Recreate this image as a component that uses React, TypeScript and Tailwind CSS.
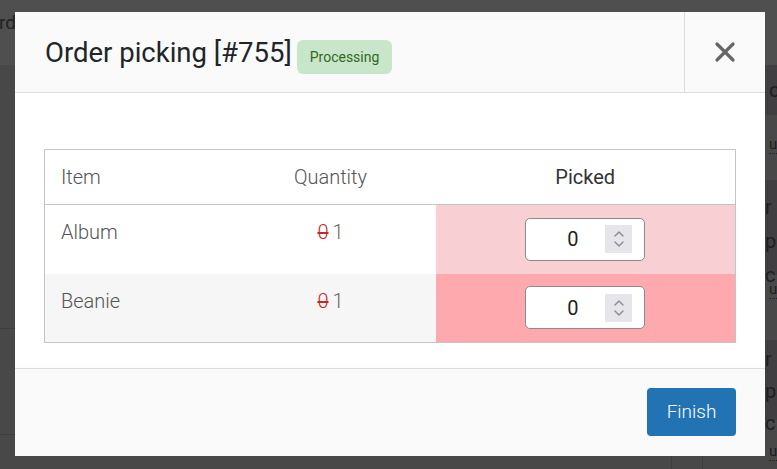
import { ChevronUp, ChevronDown, X } from 'lucide-react';

const rows = [
  { name: 'Album', bg: 'bg-white', picked: 'bg-[#f8d0d3]' },
  { name: 'Beanie', bg: 'bg-[#f5f6f5]', picked: 'bg-[#fea9ae]' },
];

function Stepper() {
  return (
    <div className="w-[120px] h-[43px] rounded-[5px] border border-[#8b8b8b] bg-white flex items-center">
      <span className="flex-1 pl-[14px] text-center text-[20px] text-[#222]">0</span>
      <div className="mr-[12px] w-[27px] h-[28px] bg-[#e6e5ea] flex flex-col items-center justify-center text-[#8a8890]">
        <ChevronUp size={16} strokeWidth={2} className="-mb-[3px]" />
        <ChevronDown size={16} strokeWidth={2} className="-mt-[3px]" />
      </div>
    </div>
  );
}

export default function App() {
  return (
    <div className="relative h-[469px] w-[777px] overflow-hidden bg-[#484848] font-['Roboto',sans-serif]">
      {/* page behind the modal */}
      <div className="h-[65px] bg-[#4f4f4f] pt-[9px] -ml-[1px] text-[19px] text-[#222]">rd</div>
      <div className="flex">
        <div className="flex-1">
          <div className="h-[264px] border-b border-[#3e3e3e]" />
          <div className="h-[106px] border-b border-[#3e3e3e]" />
          <div className="flex h-[40px] justify-end pr-[2px]">
            <div className="w-[32px] border-x border-[#3e3e3e]" />
          </div>
        </div>
        <div className="w-[72px] text-[20px] text-[#1e1e22]">
          <div className="h-[50px] bg-[#403e41] pt-[10px] pl-[64px]">c</div>
          <div className="h-[65px] pt-[18px] pl-[64px] text-[15px]"><span className="border-b border-dotted border-[#222]">us</span></div>
          <div className="h-[95px] bg-[#403e41] pt-[10px] pl-[60px] leading-[34px]">r p<br />c</div>
          <div className="h-[65px] pt-[3px] pl-[64px] text-[15px]"><span className="border-b border-dotted border-[#222]">us</span></div>
          <div className="h-[80px] bg-[#403e41] pt-[3px] pl-[60px] leading-[32px]">r p<br />c</div>
          <div className="h-[49px] pt-[20px] pl-[64px] text-[15px]"><span className="border-b border-dotted border-[#222]">us</span></div>
        </div>
      </div>

      {/* modal */}
      <div className="absolute inset-0 pl-[15px] pt-[12px]">
        <div className="w-[750px] h-[444px] bg-white flex flex-col">
          <div className="flex h-[81px] bg-[#fafafa] border-b border-[#dddddd]">
            <div className="flex-1 flex items-center pl-[30px] pt-[1px]">
              <h1 className="text-[27.5px] text-[#212529] leading-none">Order picking [#755]</h1>
              <span className="ml-[5px] mt-[9px] h-[34px] px-[13px] flex items-center rounded-[6px] bg-[#c8e6c9] text-[14px] text-[#33691e]">Processing</span>
            </div>
            <div className="w-[81px] border-l border-[#dddddd] flex items-center justify-center pb-[1px]">
              <X size={32} strokeWidth={2.4} className="text-[#666]" />
            </div>
          </div>

          <div className="flex-1 px-[29px] pt-[56px]">
            <table className="w-full border border-[#c2c4c6] border-collapse text-[20px]">
              <thead>
                <tr className="h-[55px] border-b border-[#c2c4c6]">
                  <th className="w-[181px] pl-[16px] text-left font-light text-[#555]">Item</th>
                  <th className="w-[210px] text-center font-light text-[#555]">Quantity</th>
                  <th className="text-center font-normal text-[#333]">Picked</th>
                </tr>
              </thead>
              <tbody>
                {rows.map((r) => (
                  <tr key={r.name} className={`h-[69px] ${r.bg}`}>
                    <td className="align-top pl-[16px] pt-[12px] font-light text-[#555]">{r.name}</td>
                    <td className="align-top pt-[12px] text-center text-[#666] font-light">
                      <span className="line-through text-[#c62828]">0</span>
                      <span className="ml-[4px]">1</span>
                    </td>
                    <td className={`${r.picked} align-middle`}>
                      <div className="flex justify-center">
                        <Stepper />
                      </div>
                    </td>
                  </tr>
                ))}
              </tbody>
            </table>
          </div>

          <div className="h-[88px] bg-[#fafafa] border-t border-[#dddddd] flex justify-end items-start pt-[19px] pr-[29px] shadow-[0_-2px_4px_rgba(0,0,0,0.02)]">
            <button className="w-[89px] h-[48px] rounded-[4px] bg-[#2273b4] text-white text-[19px] font-light">Finish</button>
          </div>
        </div>
      </div>
    </div>
  );
}
